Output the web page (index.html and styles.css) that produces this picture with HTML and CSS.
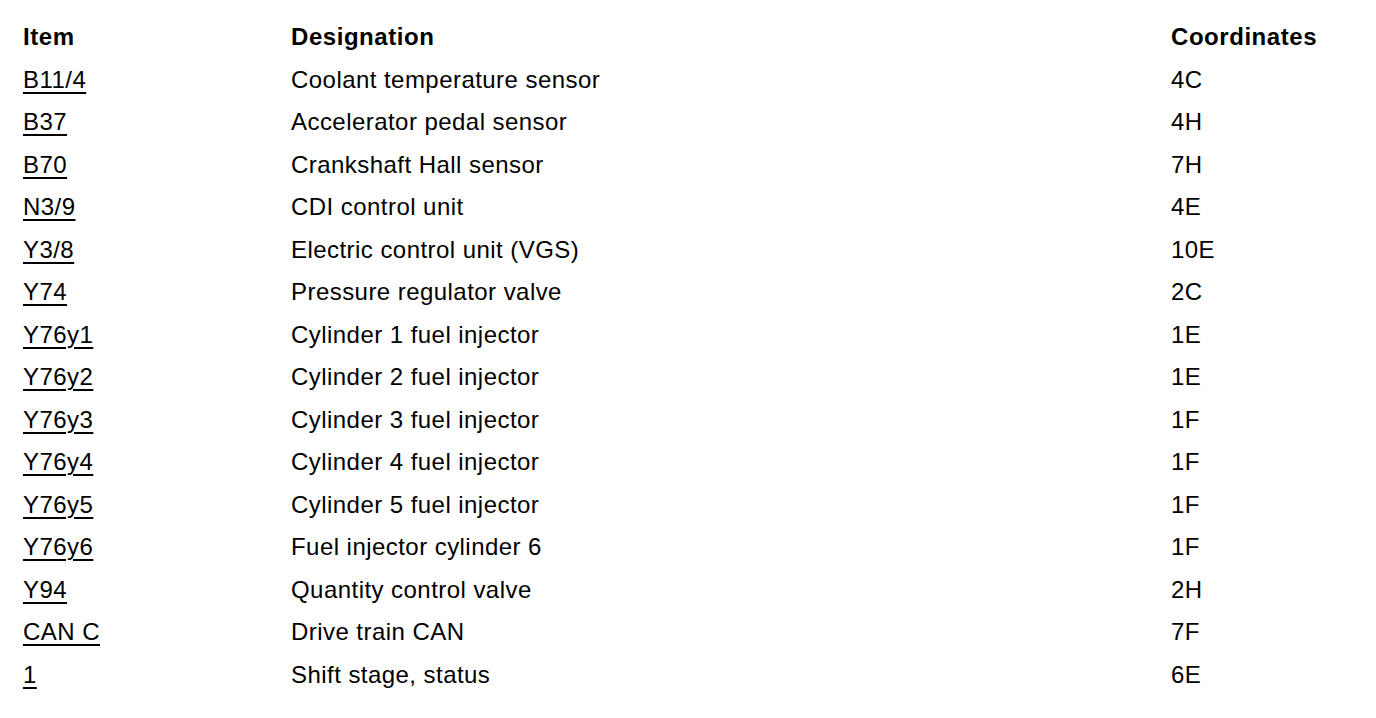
FILE: index.html
```html
<!DOCTYPE html>
<html lang="en">
<head>
<meta charset="utf-8">
<title>Items</title>
<link rel="stylesheet" href="styles.css">
</head>
<body>
<div class="table">
  <div class="row head"><div>Item</div><div>Designation</div><div>Coordinates</div></div>
  <div class="row"><div><a href="#">B11/4</a></div><div>Coolant temperature sensor</div><div>4C</div></div>
  <div class="row"><div><a href="#">B37</a></div><div>Accelerator pedal sensor</div><div>4H</div></div>
  <div class="row"><div><a href="#">B70</a></div><div>Crankshaft Hall sensor</div><div>7H</div></div>
  <div class="row"><div><a href="#">N3/9</a></div><div>CDI control unit</div><div>4E</div></div>
  <div class="row"><div><a href="#">Y3/8</a></div><div>Electric control unit (VGS)</div><div>10E</div></div>
  <div class="row"><div><a href="#">Y74</a></div><div>Pressure regulator valve</div><div>2C</div></div>
  <div class="row"><div><a href="#">Y76y1</a></div><div>Cylinder 1 fuel injector</div><div>1E</div></div>
  <div class="row"><div><a href="#">Y76y2</a></div><div>Cylinder 2 fuel injector</div><div>1E</div></div>
  <div class="row"><div><a href="#">Y76y3</a></div><div>Cylinder 3 fuel injector</div><div>1F</div></div>
  <div class="row"><div><a href="#">Y76y4</a></div><div>Cylinder 4 fuel injector</div><div>1F</div></div>
  <div class="row"><div><a href="#">Y76y5</a></div><div>Cylinder 5 fuel injector</div><div>1F</div></div>
  <div class="row"><div><a href="#">Y76y6</a></div><div>Fuel injector cylinder 6</div><div>1F</div></div>
  <div class="row"><div><a href="#">Y94</a></div><div>Quantity control valve</div><div>2H</div></div>
  <div class="row"><div><a href="#">CAN C</a></div><div>Drive train CAN</div><div>7F</div></div>
  <div class="row"><div><a href="#">1</a></div><div>Shift stage, status</div><div>6E</div></div>
</div>
</body>
</html>
```
FILE: styles.css
```css
html, body {
  margin: 0;
  padding: 0;
  background: #fff;
}
body {
  font-family: "Liberation Sans", Arial, sans-serif;
  font-size: 24px;
  letter-spacing: 0.45px;
  color: #000;
}
.table {
  padding: 16px 0 0 23px;
}
.row {
  display: grid;
  grid-template-columns: 268px 880px 1fr;
  height: 42.5px;
  align-items: center;
  white-space: nowrap;
}
.row.head {
  font-weight: bold;
  letter-spacing: 0.55px;
}
.row a {
  color: #000;
  text-decoration: underline;
  text-decoration-thickness: 2px;
  text-underline-offset: 4px;
}
```
